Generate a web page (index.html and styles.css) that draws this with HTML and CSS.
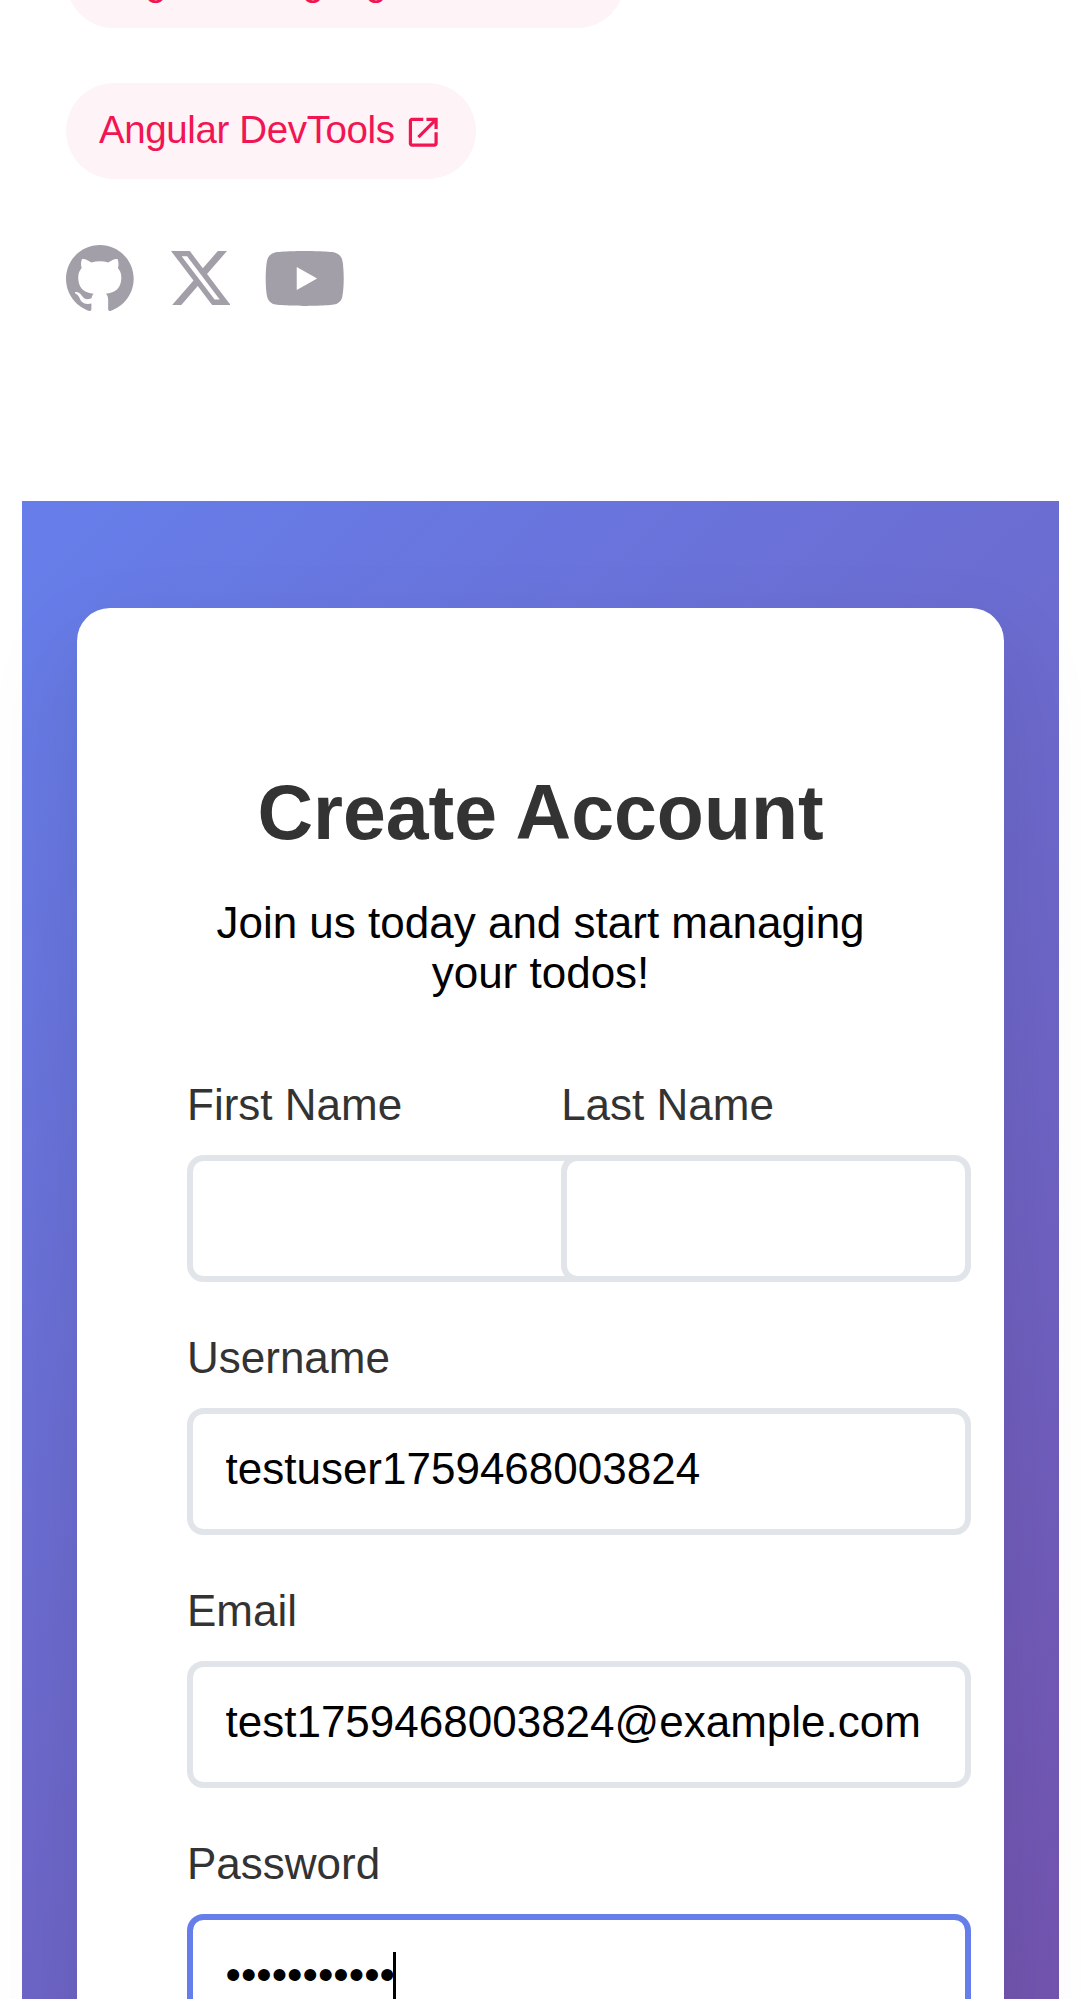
FILE: index.html
```html
<!DOCTYPE html>
<html lang="en">
<head>
<meta charset="utf-8">
<title>Create Account</title>
<link rel="stylesheet" href="styles.css">
</head>
<body>
<main class="intro">
  <nav class="pills">
    <a class="pill pill-service"><span>Angular Language Service</span>
      <svg class="pill-icon" viewBox="0 -960 960 960"><path d="M200-120q-33 0-56.500-23.500T120-200v-560q0-33 23.500-56.500T200-840h280v80H200v560h560v-280h80v280q0 33-23.500 56.500T760-120H200Zm188-212-56-56 372-372H560v-80h280v280h-80v-144L388-332Z"/></svg></a>
    <a class="pill"><span>Angular DevTools</span>
      <svg class="pill-icon" viewBox="0 -960 960 960"><path d="M200-120q-33 0-56.500-23.500T120-200v-560q0-33 23.500-56.500T200-840h280v80H200v560h560v-280h80v280q0 33-23.500 56.500T760-120H200Zm188-212-56-56 372-372H560v-80h280v280h-80v-144L388-332Z"/></svg></a>
  </nav>
  <div class="social">
    <svg class="github" viewBox="0 0 25 24"><path d="M12.3047 0C5.50634 0 0 5.50942 0 12.3047C0 17.7423 3.52529 22.3535 8.41332 23.9787C9.02856 24.0946 9.25414 23.7142 9.25414 23.3871C9.25414 23.0949 9.24389 22.3207 9.23876 21.2953C5.81601 22.0377 5.09414 19.6444 5.09414 19.6444C4.53427 18.2243 3.72524 17.8449 3.72524 17.8449C2.61064 17.082 3.81137 17.0973 3.81137 17.0973C5.04697 17.1835 5.69604 18.3647 5.69604 18.3647C6.79321 20.2463 8.57636 19.7029 9.27978 19.3881C9.39052 18.5924 9.70736 18.0499 10.0591 17.7423C7.32641 17.4347 4.45429 16.3765 4.45429 11.6618C4.45429 10.3185 4.9311 9.22133 5.72065 8.36C5.58222 8.04931 5.16694 6.79833 5.82831 5.10337C5.82831 5.10337 6.85883 4.77319 9.2121 6.36459C10.1965 6.09082 11.2424 5.95546 12.2883 5.94931C13.3342 5.95546 14.3801 6.09082 15.3644 6.36459C17.7023 4.77319 18.7328 5.10337 18.7328 5.10337C19.3942 6.79833 18.9789 8.04931 18.8559 8.36C19.6403 9.22133 20.1171 10.3185 20.1171 11.6618C20.1171 16.3888 17.2409 17.4296 14.5031 17.7321C14.9338 18.1012 15.3337 18.8559 15.3337 20.0084C15.3337 21.6552 15.3183 22.978 15.3183 23.3779C15.3183 23.7009 15.5336 24.0854 16.1642 23.9623C21.0871 22.3484 24.6094 17.7341 24.6094 12.3047C24.6094 5.50942 19.0999 0 12.3047 0Z"/></svg>
    <svg class="x" viewBox="0 1.153 24 21.693" preserveAspectRatio="none"><path d="M18.901 1.153h3.680l-8.040 9.190L24 22.846h-7.406l-5.800-7.584-6.638 7.584H.474l8.600-9.830L0 1.154h7.594l5.243 6.932ZM17.610 20.644h2.039L6.486 3.240H4.298Z"/></svg>
    <svg class="youtube" viewBox="0 0 29 20"><path d="M27.4896 1.52422C27.9301 1.96749 28.2463 2.51866 28.4068 3.12258C29.0004 5.35161 29.0004 10 29.0004 10C29.0004 10 29.0004 14.6484 28.4068 16.8774C28.2463 17.4813 27.9301 18.0325 27.4896 18.4758C27.0492 18.9191 26.5 19.2389 25.8972 19.4032C23.6778 20 14.8068 20 14.8068 20C14.8068 20 5.93586 20 3.71651 19.4032C3.11363 19.2389 2.56449 18.9191 2.12405 18.4758C1.68361 18.0325 1.36732 17.4813 1.20683 16.8774C0.613281 14.6484 0.613281 10 0.613281 10C0.613281 10 0.613281 5.35161 1.20683 3.12258C1.36732 2.51866 1.68361 1.96749 2.12405 1.52422C2.56449 1.08095 3.11363 0.76113 3.71651 0.596774C5.93586 0 14.8068 0 14.8068 0C14.8068 0 23.6778 0 25.8972 0.596774C26.5 0.76113 27.0492 1.08095 27.4896 1.52422ZM19.3229 10L11.9036 5.77905V14.221L19.3229 10Z"/></svg>
  </div>
</main>
<section class="register">
  <div class="card">
    <h2 class="title">Create Account</h2>
    <p class="subtitle">Join us today and start managing your todos!</p>
    <form>
      <div class="row">
        <div class="group"><label class="label" for="first">First Name</label><input class="input" id="first" type="text"></div>
        <div class="group"><label class="label" for="last">Last Name</label><input class="input" id="last" type="text"></div>
      </div>
      <div class="group"><label class="label" for="user">Username</label><input class="input" id="user" type="text" value="testuser1759468003824"></div>
      <div class="group"><label class="label" for="email">Email</label><input class="input" id="email" type="text" value="test1759468003824@example.com"></div>
      <div class="group"><label class="label" for="pass">Password</label>
        <div class="field"><input class="input active" id="pass" type="password" value="password123"><span class="caret"></span></div></div>
    </form>
  </div>
</section>
</body>
</html>
```
FILE: styles.css
```css
* { margin: 0; }

html { overflow: hidden; }

body {
  height: 1999px;
  overflow: hidden;
  background: #fff;
  font-family: "Liberation Sans", Arial, sans-serif;
  font-size: 44px;
  color: #000;
}

.intro {
  height: 500.6px;
  padding-left: 66px;
  display: flex;
  flex-direction: column;
  box-sizing: border-box;
}

.pills {
  display: flex;
  flex-direction: column;
  align-items: flex-start;
  gap: 55px;
  margin-top: -67.500px;
}

.pill {
  display: flex;
  align-items: center;
  gap: 9.500px;
  padding: 15.500px 33px 17.500px;
  border-radius: 121px;
  font-size: 38.500px;
  line-height: 62.500px;
  letter-spacing: -0.385px;
  color: oklch(61.42% 0.238 15.34);
  background: color-mix(in srgb, oklch(61.42% 0.238 15.34) 5%, transparent);
}

.pill-service {
  padding-top: 18.500px;
  padding-bottom: 14.500px;
}

.pill-icon {
  width: 38.500px;
  height: 38.500px;
  fill: currentColor;
  margin-top: 4px;
}

.social {
  display: flex;
  align-items: center;
  gap: 32px;
  margin-top: 66px;
  fill: oklch(70.9% 0.015 304.04);
}

.github { width: 68.750px; height: 66px; }
.x { width: 59.500px; height: 54px; margin: 0 1.500px 0 4px; }
.youtube { width: 79.750px; height: 55px; margin-top: 1px; }

.register {
  min-height: 2070px;
  margin: 0 22px;
  padding: 107.400px 55px 55px;
  box-sizing: border-box;
  background: linear-gradient(135deg, #667eea 0%, #764ba2 100%);
}

.card {
  min-height: 1840px;
  padding: 160px 110px 110px;
  box-sizing: border-box;
  border-radius: 33px;
  background: #fff;
  box-shadow: 0 41px 96px rgba(0, 0, 0, 0.1);
}

.title {
  font-size: 77px;
  line-height: 88px;
  text-align: center;
  color: #333;
}

.subtitle {
  margin-top: 42.500px;
  line-height: 50px;
  text-align: center;
}

form { margin-top: 82px; }

.row {
  display: grid;
  grid-template-columns: 1fr 1fr;
  gap: 41.250px;
}

.group { height: 253px; min-width: 0; }

.label {
  display: block;
  margin-bottom: 25px;
  line-height: 50px;
  color: #333;
}

.input {
  display: block;
  box-sizing: content-box;
  width: 100%;
  height: 49.500px;
  padding: 29.500px 32.500px 35.500px;
  border: 6px solid #e1e5e9;
  border-radius: 16.500px;
  background: #fff;
  font: inherit;
  color: #000;
  outline: none;
}

.active { border-color: #667eea; }

.field { position: relative; }

.caret {
  position: absolute;
  left: 206px;
  top: 38px;
  width: 3px;
  height: 50px;
  background: #000;
}
```
